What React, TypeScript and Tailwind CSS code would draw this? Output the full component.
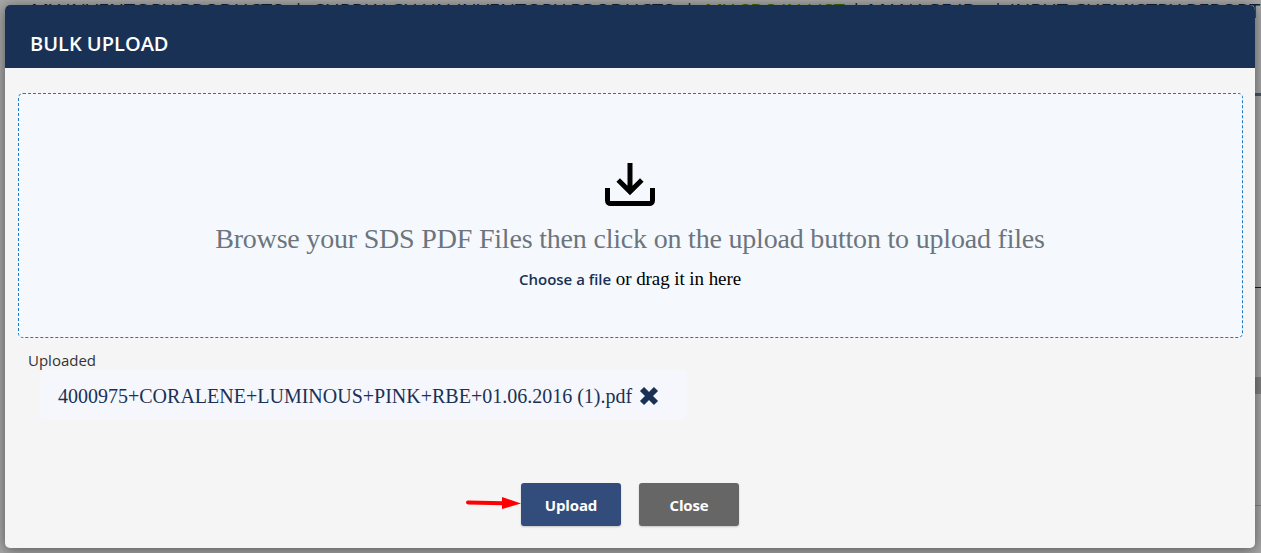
import { useState } from 'react';

const navItems = [
    { label: 'MY INVENTORY PRODUCTS' },
    { label: 'SUPPLY CHAIN INVENTORY PRODUCTS' },
    { label: 'MY SDS IN LIST', active: true },
    { label: 'MANAGE IDs' },
    { label: 'INPUT CHEMISTRY REPORT' },
];

const DownloadIcon = () => (
    <svg width="52" height="44" viewBox="0 0 52 44" fill="none" stroke="#000" strokeWidth="5">
        <path d="M3.5 25v12.5a3 3 0 0 0 3 3h39a3 3 0 0 0 3-3V25" />
        <path d="M26 0v29M14.2 17 26 28.8 37.8 17" />
    </svg>
);

const RemoveIcon = () => (
    <svg width="20" height="20" viewBox="0 0 20 20" fill="none" stroke="#1a3156" strokeWidth="5.8" strokeLinejoin="round">
        <path d="M3 3l14 14M17 3 3 17" />
    </svg>
);

const ArrowMark = () => (
    <svg width="56" height="14" viewBox="0 0 56 14" className="mb-[3px] shrink-0">
        <path d="M3 6.4 38 7.2" stroke="#ff0000" strokeWidth="4" strokeLinecap="round" />
        <path d="M37 1 56 7.4 37 13z" fill="#ff0000" />
    </svg>
);

const App = () => {
    const [files, setFiles] = useState(['4000975+CORALENE+LUMINOUS+PINK+RBE+01.06.2016 (1).pdf']);

    return (
        <div className="relative h-[553px] w-[1261px] overflow-hidden bg-[#a8a8a8] p-[5px]">
            {/* Page behind the dialog */}
            <nav className="absolute left-[31px] top-px flex whitespace-nowrap font-['Open_Sans',sans-serif] text-[20px] leading-[20px] text-[#10203c]">
                {navItems.map((item, i) => (
                    <span key={item.label} className={item.active ? 'text-[#456a00]' : ''}>
                        {i > 0 && <span className={`text-[#10203c] ${i < 3 ? 'px-[10px]' : 'px-[6px]'}`}>|</span>}
                        {item.label}
                    </span>
                ))}
            </nav>
            <div className="absolute right-0 top-[93px] h-[3px] w-2 bg-[#43566b]" />
            <div className="absolute right-0 top-[287px] h-px w-2 bg-[#10182a]" />
            <div className="absolute right-0 top-[377px] h-[17px] w-2 bg-[#828282]" />
            <div className="absolute right-0 top-[505px] h-px w-2 bg-[#858585]" />

            {/* Dialog */}
            <div className="relative flex h-[543px] w-[1250px] flex-col overflow-hidden rounded-[5px] bg-[#f5f5f5] shadow-[0_2px_14px_rgba(0,0,0,0.5)]">
                <header className="flex h-[63px] shrink-0 items-center bg-[#1a3156] pl-[25px] pt-[14px]">
                    <h2 className="font-['Open_Sans',sans-serif] text-[20px] font-semibold leading-7 text-white">BULK UPLOAD</h2>
                </header>

                <div className="pl-[13px] pr-3 pt-[25px]">
                    <div className="flex h-[245px] flex-col items-center rounded-[5px] border border-dashed border-[#1b79c9] bg-[#f5f9fd] pr-px pt-[69px]">
                        <DownloadIcon />
                        <p className="mt-[14px] font-['Liberation_Serif',serif] text-[28px] leading-[36px] tracking-[-0.195px] text-[#6c757d]">
                            Browse your SDS PDF Files then click on the upload button to upload files
                        </p>
                        <p className="mt-[8px] font-['Liberation_Serif',serif] text-[19px] leading-[28px] tracking-[-0.08px] text-black">
                            <span className="cursor-pointer font-['Open_Sans',sans-serif] text-[15px] font-semibold tracking-normal text-[#1a3156]">Choose a file</span> or drag it in here
                        </p>
                    </div>
                </div>

                <div className="pl-[23px] pt-[12px]">
                    <div className="font-['Open_Sans',sans-serif] text-[15px] leading-[20px] text-[#333]">Uploaded</div>
                    {files.map((name) => (
                        <div key={name} className="ml-3 flex h-[50px] w-[647px] items-center rounded-[5px] bg-[#f5f7fc] pl-[18px] pt-[2px]">
                            <span className="font-['Liberation_Serif',serif] text-[20px] leading-[28px] text-[#1a3156]">{name}</span>
                            <button type="button" aria-label="Remove" className="ml-[7px]" onClick={() => setFiles(files.filter((f) => f !== name))}>
                                <RemoveIcon />
                            </button>
                        </div>
                    ))}
                </div>

                <footer className="mb-[22px] mt-auto flex items-center pl-[460px] font-['Open_Sans',sans-serif] text-[15px] font-bold text-white">
                    <ArrowMark />
                    <button type="button" className="h-[43px] w-[100px] rounded-[3px] bg-[#324d7c] pt-[2px] tracking-[-0.15px] shadow-[0_1px_2px_rgba(0,0,0,0.2)]">Upload</button>
                    <button type="button" className="ml-[18px] h-[43px] w-[100px] rounded-[3px] bg-[#666] pt-[2px] tracking-[-0.15px] shadow-[0_1px_2px_rgba(0,0,0,0.2)]">Close</button>
                </footer>
            </div>
        </div>
    );
};

export default App;
